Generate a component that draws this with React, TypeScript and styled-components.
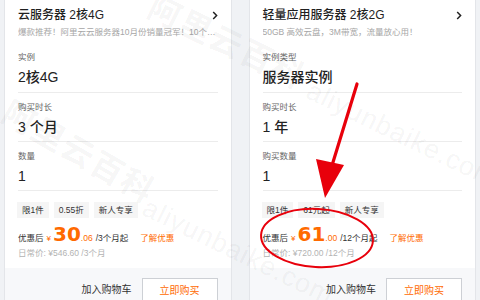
import React from "react";
import styled, { createGlobalStyle } from "styled-components";

const Global = createGlobalStyle`
  html, body { margin: 0; padding: 0; }
  body {
    width: 480px; height: 300px; overflow: hidden;
    background: #f0f2f5;
    font-family: "Liberation Sans", "Noto Sans CJK SC", sans-serif;
  }
`;

const ORANGE = "#ff6a00";

const Page = styled.div`
  position: relative;
  box-sizing: border-box;
  width: 480px;
  height: 300px;
  overflow: hidden;
  display: flex;
  gap: 17px;
  padding: 0 4px;
  background: #f0f2f5;
`;

const Card = styled.div`
  flex: 1;
  min-width: 0;
  background: #fff;
  border: 1px solid #e3e5e9;
  border-top: none;
  display: flex;
  flex-direction: column;
`;

const Body = styled.div`
  padding: 6px 13px 0;
`;

const TitleRow = styled.div`
  display: flex;
  align-items: center;
  justify-content: space-between;
  height: 18px;
`;

const Title = styled.div`
  font-size: 12px;
  font-weight: 500;
  color: #1f1f1f;
  line-height: 18px;
`;

const Subtitle = styled.div`
  margin-top: 2px;
  font-size: 8.5px;
  line-height: 12px;
  color: #a6a6a6;
  white-space: nowrap;
  overflow: hidden;
  text-overflow: ellipsis;
`;

const Field = styled.div<{ $first?: boolean }>`
  padding: ${(p) => (p.$first ? "13px 0 5px" : "8px 0 4px")};
  border-top: ${(p) => (p.$first ? "none" : "1px solid #ececec")};
`;

const Label = styled.div`
  font-size: 8.5px;
  line-height: 12px;
  color: #666;
`;

const Value = styled.div`
  margin-top: 4px;
  font-size: 14px;
  line-height: 20px;
  font-weight: 500;
  color: #222;
`;

const Offer = styled.div`
  border-top: 1px solid #ececec;
  padding: 11px 0 9px;
`;

const Tags = styled.div`
  display: flex;
  gap: 5px;
  margin-left: -1px;
`;

const Tag = styled.span`
  height: 16px;
  line-height: 16px;
  padding: 0 5px;
  background: #f5f5f5;
  font-size: 8.5px;
  color: #333;
`;

const PriceRow = styled.div`
  margin-top: 5px;
  height: 22px;
  display: flex;
  align-items: baseline;
  line-height: 22px;
  font-size: 8.5px;
  color: #333;
  white-space: nowrap;
`;

const Yen = styled.span`
  color: ${ORANGE};
  font-size: 8px;
  margin-left: 3px;
`;

const BigNum = styled.span`
  color: ${ORANGE};
  font-family: "DejaVu Sans", sans-serif;
  font-weight: 700;
  font-size: 20px;
  margin-left: 2px;
`;

const Cents = styled.span`
  color: ${ORANGE};
  font-size: 8.5px;
`;

const Unit = styled.span`
  margin-left: 3px;
  color: #333;
`;

const Learn = styled.span`
  margin-left: 12px;
  color: ${ORANGE};
`;

const Daily = styled.div`
  margin-top: 2px;
  font-size: 8.5px;
  line-height: 12px;
  color: #b3b3b3;
`;

const Footer = styled.div`
  flex: 1;
  background: #f7f8fa;
  padding: 10px 13px;
  display: flex;
  justify-content: flex-end;
  align-items: flex-start;
  gap: 10px;
`;

const CartText = styled.span`
  font-size: 10px;
  line-height: 23px;
  color: #333;
`;

const BuyButton = styled.button`
  box-sizing: border-box;
  width: 76px;
  height: 23px;
  border: 1px solid #cdd0d5;
  background: #fff;
  color: ${ORANGE};
  font-family: inherit;
  font-size: 10px;
  padding: 0;
`;

const Watermark = styled.span<{ $x: number; $y: number; $rot: number; $size: number; $bold?: boolean }>`
  position: absolute;
  left: ${(p) => p.$x}px;
  top: ${(p) => p.$y}px;
  transform: translate(-50%, -50%) rotate(${(p) => p.$rot}deg);
  font-size: ${(p) => p.$size}px;
  font-weight: ${(p) => (p.$bold ? 700 : 400)};
  color: rgba(0, 0, 0, 0.055);
  white-space: nowrap;
  pointer-events: none;
  letter-spacing: ${(p) => (p.$bold ? "2px" : "1px")};
`;

const Marks = styled.svg`
  position: absolute;
  left: 0;
  top: 0;
  pointer-events: none;
`;

const Chevron = () => (
  <svg width="6" height="9" viewBox="0 0 6 9">
    <path d="M1.2 1 L4.6 4.5 L1.2 8" fill="none" stroke="#222" strokeWidth="1.5" />
  </svg>
);

type Product = {
  title: string;
  sub: string;
  fields: [string, string][];
  tags: string[];
  big: string;
  cents: string;
  unit: string;
  daily: string;
};

const products: Product[] = [
  {
    title: "云服务器 2核4G",
    sub: "爆款推荐！阿里云云服务器10月份销量冠军！10个月连续销量第一",
    fields: [
      ["实例", "2核4G"],
      ["购买时长", "3 个月"],
      ["数量", "1"],
    ],
    tags: ["限1件", "0.55折", "新人专享"],
    big: "30",
    cents: ".06",
    unit: "/3个月起",
    daily: "日常价: ¥546.60 /3个月",
  },
  {
    title: "轻量应用服务器 2核2G",
    sub: "50GB 高效云盘，3M带宽，流量放心用！",
    fields: [
      ["实例类型", "服务器实例"],
      ["购买时长", "1 年"],
      ["购买数量", "1"],
    ],
    tags: ["限1件", "61元起", "新人专享"],
    big: "61",
    cents: ".00",
    unit: "/12个月起",
    daily: "日常价: ¥720.00 /12个月",
  },
];

const ProductCard = ({ p }: { p: Product }) => (
  <Card>
    <Body>
      <TitleRow>
        <Title>{p.title}</Title>
        <Chevron />
      </TitleRow>
      <Subtitle>{p.sub}</Subtitle>
      {p.fields.map(([l, v], i) => (
        <Field key={l} $first={i === 0}>
          <Label>{l}</Label>
          <Value>{v}</Value>
        </Field>
      ))}
      <Offer>
        <Tags>
          {p.tags.map((t) => (
            <Tag key={t}>{t}</Tag>
          ))}
        </Tags>
        <PriceRow>
          优惠后<Yen>¥</Yen>
          <BigNum>{p.big}</BigNum>
          <Cents>{p.cents}</Cents>
          <Unit>{p.unit}</Unit>
          <Learn>了解优惠</Learn>
        </PriceRow>
        <Daily>{p.daily}</Daily>
      </Offer>
    </Body>
    <Footer>
      <CartText>加入购物车</CartText>
      <BuyButton>立即购买</BuyButton>
    </Footer>
  </Card>
);

export default function App() {
  return (
    <>
      <Global />
      <Page>
        {products.map((p) => (
          <ProductCard key={p.title} p={p} />
        ))}
        <Watermark $x={228} $y={40} $rot={26} $size={32} $bold>阿里云百科</Watermark>
        <Watermark $x={80} $y={150} $rot={30} $size={32} $bold>阿里云百科</Watermark>
        <Watermark $x={402} $y={135} $rot={26} $size={27}>aliyunbaike.com</Watermark>
        <Watermark $x={238} $y={252} $rot={26} $size={27}>aliyunbaike.com</Watermark>
        <Marks width="480" height="300" viewBox="0 0 480 300">
          <line x1="357" y1="84" x2="330" y2="172" stroke="#e8000b" strokeWidth="3.2" strokeLinecap="round" />
          <polygon points="325,198 316,159 344,165" fill="#e8000b" />
          <ellipse cx="317" cy="238" rx="56" ry="29" fill="none" stroke="#e8000b" strokeWidth="2" transform="rotate(3 317 238)" />
        </Marks>
      </Page>
    </>
  );
}
